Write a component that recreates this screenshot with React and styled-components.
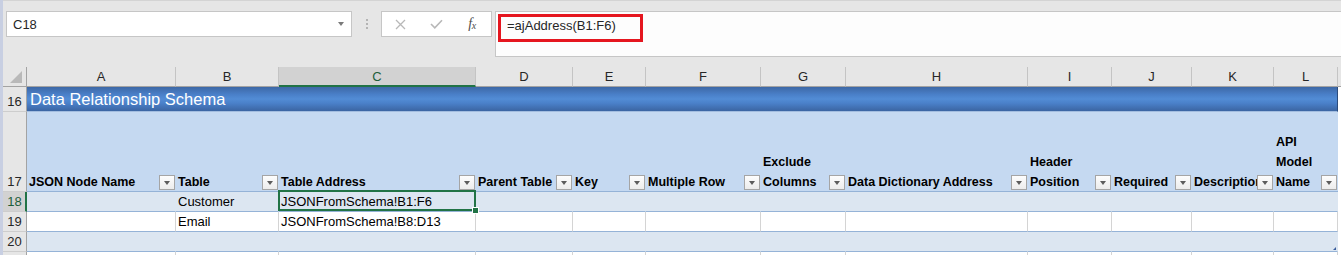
import React from "react";
import styled, { createGlobalStyle } from "styled-components";

const GlobalStyle = createGlobalStyle`
  html, body {
    margin: 0;
    padding: 0;
    background: #e6e6e6;
  }
  body {
    font-family: "Liberation Sans", Arial, sans-serif;
    color: #000;
  }
`;

const COLS = [
  { id: "A", w: 149, head: ["JSON Node Name"] },
  { id: "B", w: 103, head: ["Table"], r18: "Customer", r19: "Email" },
  { id: "C", w: 197, head: ["Table Address"], r18: "JSONFromSchema!B1:F6", r19: "JSONFromSchema!B8:D13" },
  { id: "D", w: 97, head: ["Parent Table"] },
  { id: "E", w: 73, head: ["Key"] },
  { id: "F", w: 115, head: ["Multiple Row"] },
  { id: "G", w: 85, head: ["Exclude", "Columns"] },
  { id: "H", w: 182, head: ["Data Dictionary Address"] },
  { id: "I", w: 84, head: ["Header", "Position"] },
  { id: "J", w: 80, head: ["Required"] },
  { id: "K", w: 82, head: ["Description"] },
  { id: "L", w: 64, head: ["API", "Model", "Name"] },
];

const ACTIVE_COL = "C";
const ACTIVE_ROW = 18;
const GREEN = "#217346";
const TABLE_LINE = "#95b3d7";

const Window = styled.div`
  width: 1341px;
  height: 255px;
  overflow: hidden;
  box-sizing: border-box;
  border-left: 3px solid #c8cfe2;
  background: #e6e6e6;
  display: flex;
  flex-direction: column;
`;

/* ---------- formula bar ---------- */

const FormulaBar = styled.div`
  height: 67px;
  flex: none;
  box-sizing: border-box;
  border-top: 1px solid #d4d4d4;
  padding: 10px 0 0 3px;
  display: flex;
  align-items: flex-start;
`;

const NameBox = styled.div`
  width: 346px;
  height: 26px;
  box-sizing: border-box;
  border: 1px solid #c6c6c6;
  background: #fff;
  display: flex;
  align-items: center;
  justify-content: space-between;
  padding: 0 7px 0 6px;
  font-size: 13px;
  color: #262626;
`;

const Caret = styled.span`
  width: 0;
  height: 0;
  border-left: 3.5px solid transparent;
  border-right: 3.5px solid transparent;
  border-top: 4px solid #7a7a7a;
`;

const Grip = styled.div`
  margin: 8px 0 0 14px;
  width: 2px;
  display: flex;
  flex-direction: column;
  gap: 2px;

  span {
    width: 2px;
    height: 2px;
    background: #b4b4b4;
  }
`;

const Buttons = styled.div`
  margin-left: 13px;
  width: 111px;
  height: 26px;
  box-sizing: border-box;
  border: 1px solid #c6c6c6;
  background: #fff;
  display: flex;
`;

const BarButton = styled.div`
  width: 36px;
  display: flex;
  align-items: center;
  justify-content: center;
  color: ${(p) => p.$color || "#b8b8b8"};
`;

const Fx = styled.span`
  font-family: "Liberation Serif", "Times New Roman", serif;
  font-style: italic;
  font-size: 14px;
  color: #4d4d4d;
  letter-spacing: -0.5px;

  sub {
    font-size: 10px;
    vertical-align: -1px;
  }
`;

const FormulaInput = styled.div`
  margin-left: 3px;
  flex: 1;
  height: 46px;
  box-sizing: border-box;
  border: 1px solid #c6c6c6;
  border-right: none;
  background: #fdfdfd;
  padding: 2px 0 0 2px;
`;

const Highlight = styled.div`
  width: 145px;
  height: 28px;
  box-sizing: border-box;
  border: 3px solid #e5161f;
  padding: 0 0 0 6px;
  font-size: 13px;
  line-height: 17px;
  color: #262626;
`;

/* ---------- sheet ---------- */

const Sheet = styled.div`
  display: flex;
  flex-direction: column;
  flex: 1;
`;

const Row = styled.div`
  display: flex;
  flex: none;
  height: ${(p) => p.$h}px;
`;

const Corner = styled.div`
  width: 24px;
  box-sizing: border-box;
  border-right: 1px solid #a3a3a3;
  border-bottom: 1px solid #a3a3a3;
  background: #e6e6e6;
  position: relative;

  &::after {
    content: "";
    position: absolute;
    right: 4px;
    bottom: 3px;
    width: 0;
    height: 0;
    border-left: 12px solid transparent;
    border-bottom: 12px solid #b9b9b9;
  }
`;

const ColHead = styled.div`
  width: ${(p) => p.$w}px;
  flex: none;
  box-sizing: border-box;
  border-right: 1px solid #c4c4c4;
  border-bottom: ${(p) => (p.$active ? `2px solid ${GREEN}` : "1px solid #a3a3a3")};
  background: ${(p) => (p.$active ? "#d2d2d2" : "#e6e6e6")};
  color: ${(p) => (p.$active ? "#1d5e3a" : "#262626")};
  font-size: 13px;
  line-height: 19px;
  text-align: center;
`;

const Filler = styled.div`
  flex: 1;
  box-sizing: border-box;
  background: ${(p) => (p.$gray ? "#e6e6e6" : "#fff")};
  border-bottom: ${(p) => (p.$gray ? "1px solid #a3a3a3" : "none")};
`;

const RowHead = styled.div`
  width: 24px;
  flex: none;
  box-sizing: border-box;
  border-right: ${(p) => (p.$active ? `2px solid ${GREEN}` : "1px solid #a3a3a3")};
  border-bottom: 1px solid #cdcdcd;
  background: ${(p) => (p.$active ? "#d2d2d2" : "#e6e6e6")};
  color: ${(p) => (p.$active ? "#1d5e3a" : "#262626")};
  font-size: 13px;
  line-height: 19px;
  display: flex;
  align-items: flex-end;
  justify-content: center;
  padding-left: ${(p) => (p.$active ? 1 : 0)}px;
`;

const TitleCell = styled.div`
  width: 1311px;
  flex: none;
  box-sizing: border-box;
  border-right: 1px solid #2c4c7c;
  border-bottom: 1px solid #a3bddf;
  background: linear-gradient(
    to bottom,
    #3d68a6 0%,
    #4a80c9 32%,
    #528cd5 50%,
    #4a80c9 68%,
    #3b65a2 100%
  );
  color: #fff;
  font-size: 16.5px;
  line-height: 24px;
  padding: 0 0 0 3px;
  white-space: nowrap;
`;

const HeadCell = styled.div`
  width: ${(p) => p.$w}px;
  flex: none;
  position: relative;
  box-sizing: border-box;
  background: #c5d9f1;
  border-bottom: 1px solid ${TABLE_LINE};
  padding-left: 2px;
  overflow: hidden;
  display: flex;
  flex-direction: column;
  justify-content: flex-end;
  font-size: 12.5px;
  font-weight: bold;
  line-height: 20px;

  span {
    white-space: nowrap;
    position: relative;
    top: 1px;
  }
`;

const FilterButton = styled.div`
  position: absolute;
  right: 1px;
  bottom: 1px;
  width: 16px;
  height: 15px;
  box-sizing: border-box;
  border: 1px solid #a5a5a5;
  background: linear-gradient(#fdfdfd, #ececec);
  display: flex;
  align-items: center;
  justify-content: center;

  &::after {
    content: "";
    width: 0;
    height: 0;
    border-left: 3.5px solid transparent;
    border-right: 3.5px solid transparent;
    border-top: 4px solid #5c5c5c;
  }
`;

const Cell = styled.div`
  width: ${(p) => p.$w}px;
  flex: none;
  position: relative;
  box-sizing: border-box;
  background: ${(p) => (p.$band ? "#dce6f1" : "#fff")};
  border-bottom: 1px solid ${(p) => (p.$table ? TABLE_LINE : "#d4d4d4")};
  border-right: 1px solid ${(p) => (p.$band ? "transparent" : "#d4d4d4")};
  padding: 1px 2px 0;
  font-size: 13px;
  line-height: 18px;
  white-space: nowrap;
  overflow: visible;
`;

const Selection = styled.div`
  position: absolute;
  top: -2px;
  left: -1px;
  right: -1px;
  bottom: 0;
  border: 2px solid ${GREEN};
  z-index: 2;
  pointer-events: none;

  &::after {
    content: "";
    position: absolute;
    right: -5px;
    bottom: -5px;
    width: 5px;
    height: 5px;
    background: ${GREEN};
    border: 1px solid #fff;
  }
`;

const ResizeMark = styled.span`
  position: absolute;
  right: 1px;
  bottom: 1px;
  width: 0;
  height: 0;
  border-left: 3px solid transparent;
  border-bottom: 3px solid #3a5d9c;
`;

const CloseIcon = () => (
  <svg width="11" height="11" viewBox="0 0 11 11">
    <path d="M1 1 L10 10 M10 1 L1 10" stroke="currentColor" strokeWidth="1.3" fill="none" />
  </svg>
);

const CheckIcon = () => (
  <svg width="13" height="10" viewBox="0 0 13 10">
    <path d="M1 5 L4.8 8.8 L12 1.2" stroke="currentColor" strokeWidth="1.6" fill="none" />
  </svg>
);

const DataRow = ({ n, band, values }) => (
  <Row $h={20}>
    <RowHead $active={n === ACTIVE_ROW}>{n}</RowHead>
    {COLS.map((c, i) => (
      <Cell key={c.id} $w={c.w} $band={band} $table>
        {values ? values(c) : null}
        {n === ACTIVE_ROW && c.id === ACTIVE_COL && <Selection />}
        {n === 20 && i === COLS.length - 1 && <ResizeMark />}
      </Cell>
    ))}
    <Filler />
  </Row>
);

export default function App() {
  return (
    <>
      <GlobalStyle />
      <Window>
        <FormulaBar>
          <NameBox>
            C18
            <Caret />
          </NameBox>
          <Grip>
            <span />
            <span />
            <span />
          </Grip>
          <Buttons>
            <BarButton>
              <CloseIcon />
            </BarButton>
            <BarButton>
              <CheckIcon />
            </BarButton>
            <BarButton>
              <Fx>
                f<sub>x</sub>
              </Fx>
            </BarButton>
          </Buttons>
          <FormulaInput>
            <Highlight>=ajAddress(B1:F6)</Highlight>
          </FormulaInput>
        </FormulaBar>

        <Sheet>
          <Row $h={20}>
            <Corner />
            {COLS.map((c) => (
              <ColHead key={c.id} $w={c.w} $active={c.id === ACTIVE_COL}>
                {c.id}
              </ColHead>
            ))}
            <Filler $gray />
          </Row>

          <Row $h={25}>
            <RowHead>16</RowHead>
            <TitleCell>Data Relationship Schema</TitleCell>
            <Filler />
          </Row>

          <Row $h={80}>
            <RowHead>17</RowHead>
            {COLS.map((c) => (
              <HeadCell key={c.id} $w={c.w}>
                {c.head.map((line) => (
                  <span key={line}>{line}</span>
                ))}
                <FilterButton />
              </HeadCell>
            ))}
            <Filler />
          </Row>

          <DataRow n={18} band values={(c) => c.r18} />
          <DataRow n={19} values={(c) => c.r19} />
          <DataRow n={20} band />

          <Row $h={20}>
            <RowHead />
            {COLS.map((c) => (
              <Cell key={c.id} $w={c.w} />
            ))}
            <Filler />
          </Row>
        </Sheet>
      </Window>
    </>
  );
}
